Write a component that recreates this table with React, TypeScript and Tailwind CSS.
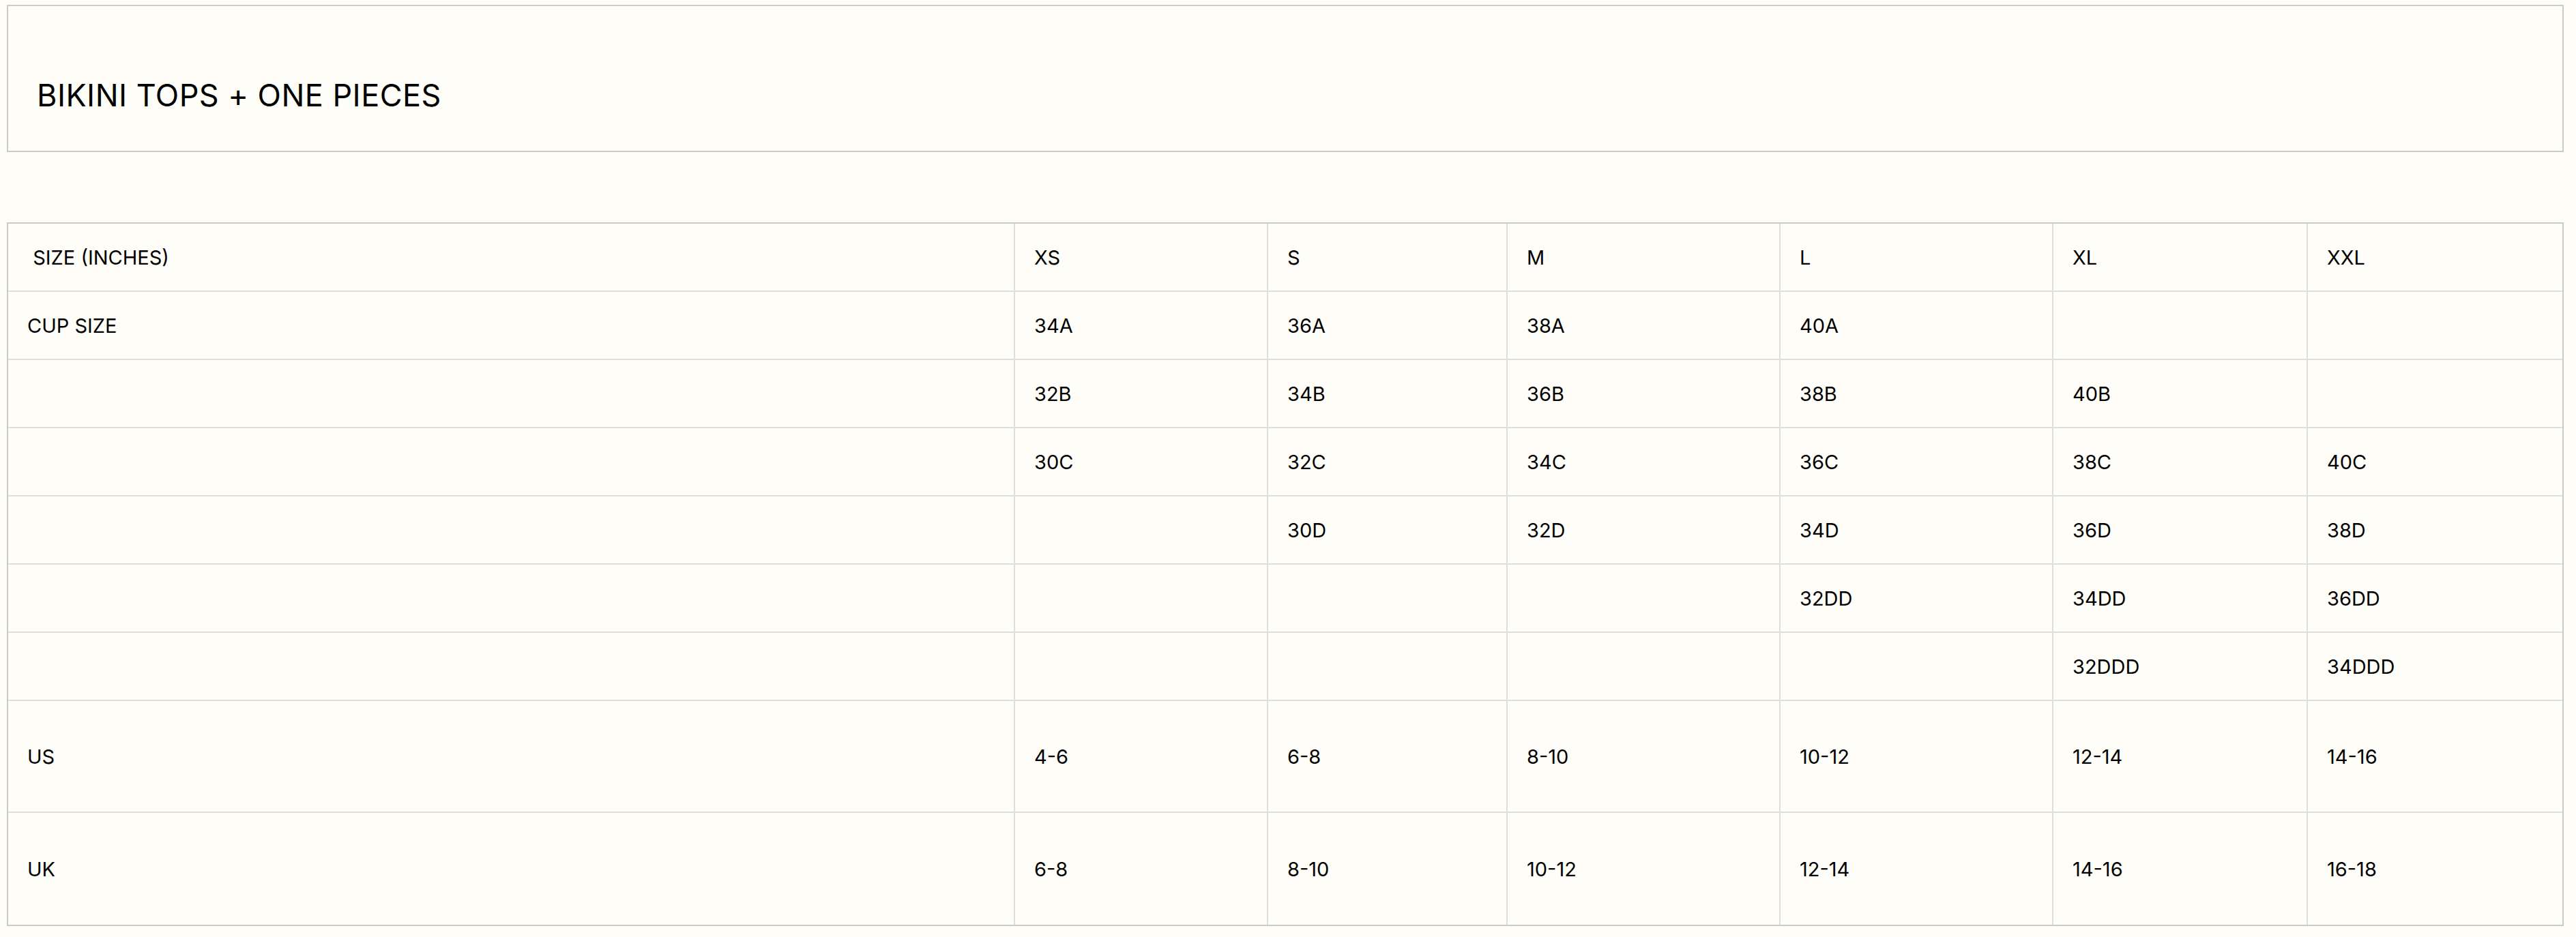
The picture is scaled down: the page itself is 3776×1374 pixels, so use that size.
const SIZES = ["XS", "S", "M", "L", "XL", "XXL"];

const COL_WIDTHS = ["w-[1476px]", "w-[371px]", "w-[351px]", "w-[400px]", "w-[400px]", "w-[373px]", ""];

const ROWS: { label: string; cells: string[]; tall?: boolean }[] = [
  { label: "CUP SIZE", cells: ["34A", "36A", "38A", "40A", "", ""] },
  { label: "", cells: ["32B", "34B", "36B", "38B", "40B", ""] },
  { label: "", cells: ["30C", "32C", "34C", "36C", "38C", "40C"] },
  { label: "", cells: ["", "30D", "32D", "34D", "36D", "38D"] },
  { label: "", cells: ["", "", "", "32DD", "34DD", "36DD"] },
  { label: "", cells: ["", "", "", "", "32DDD", "34DDD"] },
  { label: "US", cells: ["4-6", "6-8", "8-10", "10-12", "12-14", "14-16"], tall: true },
  { label: "UK", cells: ["6-8", "8-10", "10-12", "12-14", "14-16", "16-18"], tall: true },
];

function Cell({ children, last, bottom, tall }: { children?: React.ReactNode; last: boolean; bottom: boolean; tall?: boolean }) {
  return (
    <td
      className={`pl-[28px] align-middle border-[#dedede] ${tall ? "h-[164px]" : "h-[100px]"} ${
        last ? "" : "border-r-2"
      } ${bottom ? "" : "border-b-2"}`}
    >
      {children}
    </td>
  );
}

export default function App() {
  return (
    <div
      className="min-h-screen bg-[#fffdf8] pt-[7px] pl-[10px] text-black"
      style={{ fontFamily: "Inter, 'DejaVu Sans', sans-serif" }}
    >
      <div className="w-[3748px]">
        <div className="h-[216px] border-2 border-[#cbcbc7] pl-[42px] pt-[108px]">
          <h2 className="text-[45px] leading-none font-normal tracking-[0.01em]">BIKINI TOPS + ONE PIECES</h2>
        </div>

        <div className="mt-[103px] border-2 border-[#cbcbc7]">
          <table className="w-full table-fixed border-separate border-spacing-0 text-[29px] leading-none">
            <colgroup>
              {COL_WIDTHS.map((w, i) => (
                <col key={i} className={w} />
              ))}
            </colgroup>
            <thead>
              <tr>
                <Cell last={false} bottom={false}>
                  {"\u00a0SIZE (INCHES)"}
                </Cell>
                {SIZES.map((s, i) => (
                  <Cell key={s} last={i === SIZES.length - 1} bottom={false}>
                    {s}
                  </Cell>
                ))}
              </tr>
            </thead>
            <tbody>
              {ROWS.map((row, r) => (
                <tr key={r}>
                  <Cell last={false} bottom={r === ROWS.length - 1} tall={row.tall}>
                    {row.label}
                  </Cell>
                  {row.cells.map((c, i) => (
                    <Cell key={i} last={i === row.cells.length - 1} bottom={r === ROWS.length - 1} tall={row.tall}>
                      {c}
                    </Cell>
                  ))}
                </tr>
              ))}
            </tbody>
          </table>
        </div>
      </div>
    </div>
  );
}
